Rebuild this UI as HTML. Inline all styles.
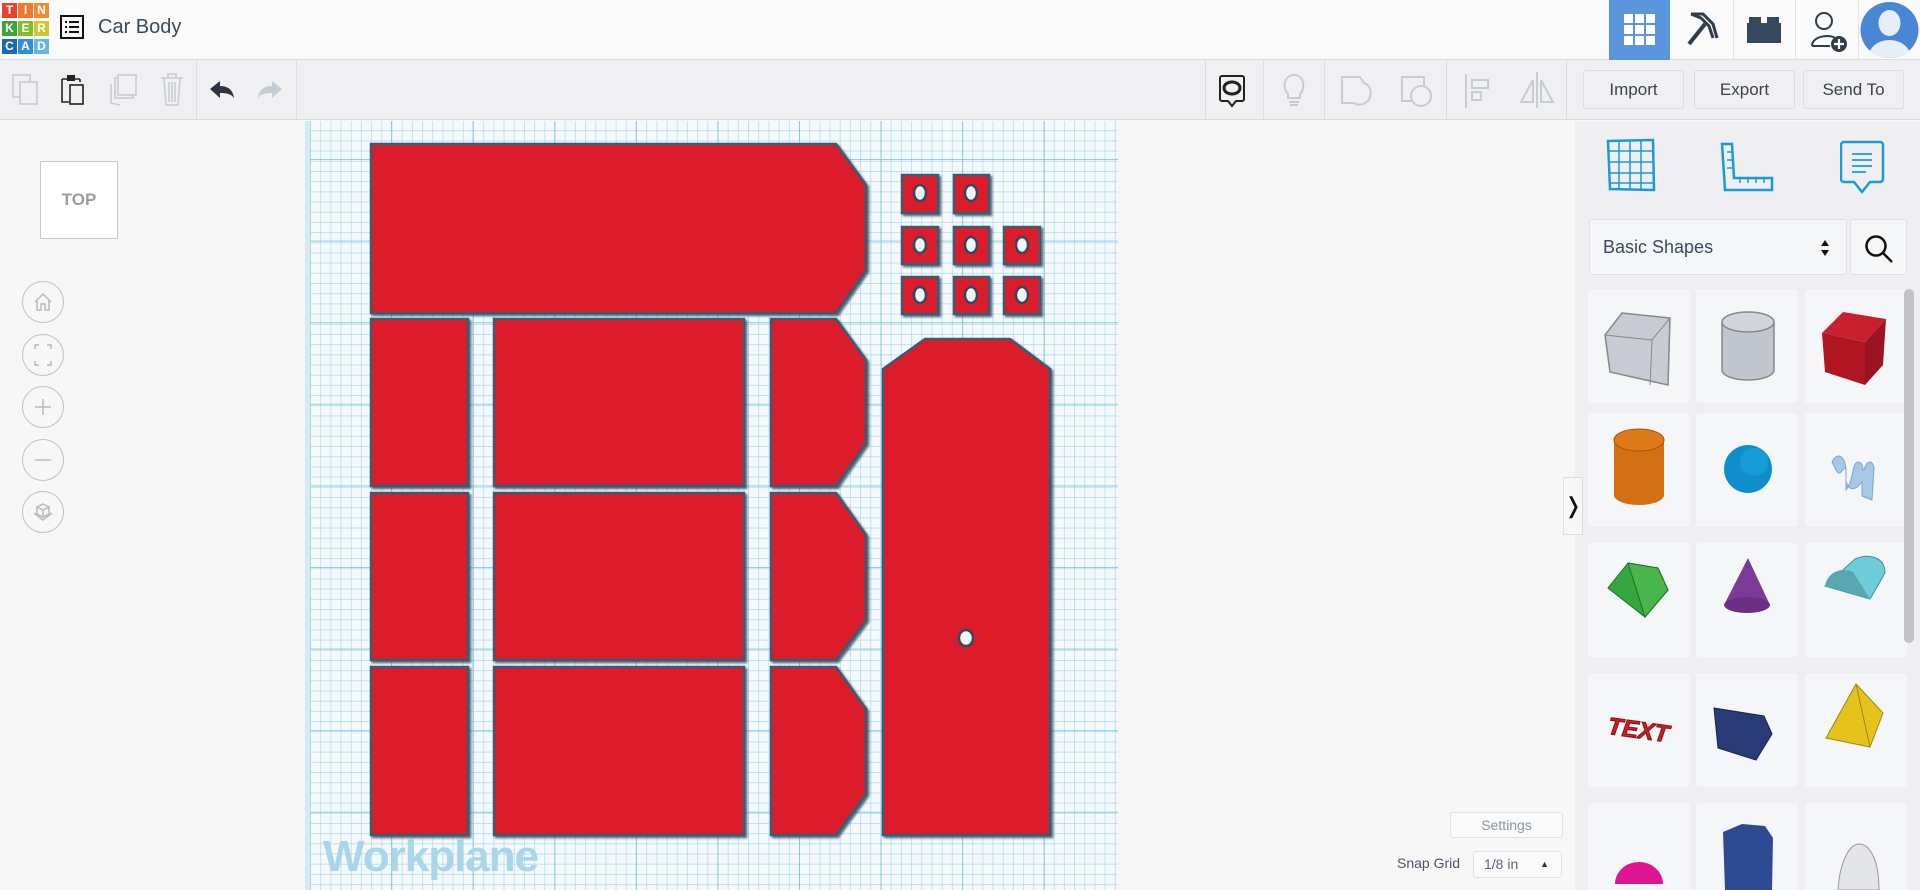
<!DOCTYPE html>
<html style="overflow:hidden;width:1920px;height:890px"><head><meta charset="utf-8"><style>
*{box-sizing:border-box;margin:0;padding:0}
body{width:1920px;height:890px;overflow:hidden;background:#f7f7f8;font-family:"Liberation Sans",sans-serif;position:relative}
.abs{position:absolute}
#hdr{left:0;top:0;width:1920px;height:60px;background:#fafafa;border-bottom:1px solid #dcdde0;box-shadow:0 1px 3px rgba(0,0,0,.08)}
#tb{left:0;top:60px;width:1920px;height:60px;background:#f0f0f2;border-bottom:1px solid #dcdde0}
.sep{position:absolute;top:60px;width:1px;height:60px;background:#dcdde0}
.tile{position:absolute;width:15px;height:15px;color:#fff;font-weight:bold;font-size:12px;text-align:center;line-height:15px}
.btn{position:absolute;top:70px;height:39px;width:101px;border:1px solid #dcdde0;border-radius:3px;background:#f0f0f2;color:#3a4250;font-size:17px;text-align:center;line-height:37px}
#wp{left:305px;top:121px;width:813px;height:769px;background-color:#f4f9fb;
background-image:
linear-gradient(90deg,rgba(120,190,220,.75) 1px,transparent 1px),
linear-gradient(0deg,rgba(120,190,220,.75) 1px,transparent 1px),
linear-gradient(90deg,rgba(150,205,230,.55) 1px,transparent 1px),
linear-gradient(0deg,rgba(150,205,230,.55) 1px,transparent 1px);
background-size:81.6px 81.6px,81.6px 81.6px,10.2px 10.2px,10.2px 10.2px;
background-position:81px 39px,81px 39px,0 0,0 0;border-left:5px solid #d5ebf4}
#rp{left:1575px;top:121px;width:345px;height:769px;background:#efeff1;overflow:hidden}
.card{position:absolute;width:102px;height:114px;background:#f5f6f8;border-radius:4px}
.circ{position:absolute;left:22px;width:42px;height:42px;border:1.5px solid #bfc1c5;border-radius:50%;background:#f7f7f8}
</style></head><body>
<div id="hdr" class="abs"></div>
<div class="tile" style="left:2px;top:3px;background:#e8412c">T</div>
<div class="tile" style="left:18px;top:3px;background:#f3762f">I</div>
<div class="tile" style="left:34px;top:3px;background:#f28a2e">N</div>
<div class="tile" style="left:2px;top:21px;background:#3aa53c">K</div>
<div class="tile" style="left:18px;top:21px;background:#7fbd2d">E</div>
<div class="tile" style="left:34px;top:21px;background:#cfc52c">R</div>
<div class="tile" style="left:2px;top:39px;background:#1869b0">C</div>
<div class="tile" style="left:18px;top:39px;background:#2f8fd2">A</div>
<div class="tile" style="left:34px;top:39px;background:#65b6e3">D</div>
<svg class="abs" style="left:60px;top:15px" width="24" height="24" viewBox="0 0 24 24"><rect x="1" y="1" width="22" height="22" fill="none" stroke="#111" stroke-width="2"/><rect x="5" y="6" width="2" height="2" fill="#111"/><rect x="9" y="6" width="10" height="2" fill="#111"/><rect x="5" y="11" width="2" height="2" fill="#111"/><rect x="9" y="11" width="10" height="2" fill="#111"/><rect x="5" y="16" width="2" height="2" fill="#111"/><rect x="9" y="16" width="10" height="2" fill="#111"/></svg>
<div class="abs" style="left:98px;top:16px;font-size:20px;color:#3a4a5e">Car Body</div>
<div class="abs" style="left:1609px;top:0;width:61px;height:60px;background:#5b96dc"></div>
<svg class="abs" style="left:1624px;top:14px" width="32" height="32"><g fill="#fff"><rect x="0" y="0" width="9" height="9"/><rect x="11" y="0" width="9" height="9"/><rect x="22" y="0" width="9" height="9"/><rect x="0" y="11" width="9" height="9"/><rect x="11" y="11" width="9" height="9"/><rect x="22" y="11" width="9" height="9"/><rect x="0" y="22" width="9" height="9"/><rect x="11" y="22" width="9" height="9"/><rect x="22" y="22" width="9" height="9"/></g></svg>
<svg class="abs" style="left:1683px;top:10px" width="40" height="40" viewBox="0 0 40 40"><path d="M8 4 L20 4 L30 14 L34 28 M8 4 L18 8 L26 16 L30 28" fill="none" stroke="#2f3c4a" stroke-width="3"/><path d="M22 14 L6 34" stroke="#2f3c4a" stroke-width="4"/></svg>
<svg class="abs" style="left:1747px;top:17px" width="34" height="26"><rect x="0" y="6" width="34" height="20" fill="#34495e"/><rect x="2" y="0" width="12" height="8" fill="#34495e"/><rect x="20" y="0" width="12" height="8" fill="#34495e"/></svg>
<svg class="abs" style="left:1810px;top:10px" width="40" height="44" viewBox="0 0 40 44"><circle cx="14" cy="11" r="8" fill="none" stroke="#2f3c4a" stroke-width="2"/><path d="M2 36 C2 24 26 24 26 30" fill="none" stroke="#2f3c4a" stroke-width="2"/><path d="M2 36 L20 36" stroke="#2f3c4a" stroke-width="2"/><circle cx="29" cy="34" r="8" fill="#2f3c4a"/><path d="M29 29v10M24 34h10" stroke="#fff" stroke-width="2.2"/></svg>
<div class="abs" style="left:1733px;top:0;width:1px;height:60px;background:#e2e3e6"></div>
<div class="abs" style="left:1795px;top:0;width:1px;height:60px;background:#e2e3e6"></div>
<div class="abs" style="left:1858px;top:0;width:1px;height:60px;background:#e2e3e6"></div>
<svg class="abs" style="left:1860px;top:1px" width="59" height="58"><defs><clipPath id="c"><ellipse cx="29.5" cy="29" rx="29" ry="28"/></clipPath></defs><ellipse cx="29.5" cy="29" rx="29" ry="28" fill="#4a86d6"/><g clip-path="url(#c)" fill="#e6eef8"><ellipse cx="29.5" cy="22" rx="11" ry="13"/><ellipse cx="29.5" cy="56" rx="21" ry="17"/></g></svg>
<div id="tb" class="abs"></div>
<svg class="abs" style="left:12px;top:74px" width="26" height="32"><rect x="1" y="1" width="17" height="22" fill="none" stroke="#c6ccd3" stroke-width="1.6"/><rect x="8" y="8" width="17" height="22" fill="#f0f0f2" stroke="#c6ccd3" stroke-width="1.6"/></svg>
<svg class="abs" style="left:61px;top:74px" width="24" height="32"><path d="M1 5h5M14 5h5M1 5v23h7M19 5v3" fill="none" stroke="#222" stroke-width="1.6"/><rect x="6" y="1" width="8" height="6" fill="#222"/><rect x="9" y="11" width="13" height="19" fill="none" stroke="#222" stroke-width="1.6"/></svg>
<svg class="abs" style="left:108px;top:74px" width="30" height="32"><path d="M3 10v19l9 2" fill="none" stroke="#c6ccd3" stroke-width="1.6"/><rect x="7" y="4" width="18" height="20" fill="none" stroke="#c6ccd3" stroke-width="1.6"/><rect x="10" y="1" width="18" height="20" fill="#f0f0f2" stroke="#c6ccd3" stroke-width="1.6"/></svg>
<svg class="abs" style="left:160px;top:72px" width="24" height="34"><path d="M1 6h22M8 6V2h8v4M4 6l2 27h12l2-27M9 10v20M12 10v20M15 10v20" fill="none" stroke="#c6ccd3" stroke-width="1.6"/></svg>
<div class="sep" style="left:196px"></div>
<svg class="abs" style="left:209px;top:80px" width="26" height="20"><path d="M1 9l10-8v5c8 0 13 4 14 12-3-4-7-5-14-5v5z" fill="#2c3540"/></svg>
<svg class="abs" style="left:257px;top:80px" width="26" height="20"><path d="M25 9l-10-8v5c-8 0-13 4-14 12 3-4 7-5 14-5v5z" fill="#c6ccd3"/></svg>
<div class="sep" style="left:296px"></div>
<div class="sep" style="left:1205px"></div>
<svg class="abs" style="left:1218px;top:74px" width="28" height="36"><path d="M4 2h20a2 2 0 0 1 2 2v21a2 2 0 0 1-2 2h-6l-4 5-4-5H4a2 2 0 0 1-2-2V4a2 2 0 0 1 2-2z" fill="none" stroke="#222" stroke-width="2"/><ellipse cx="14" cy="14" rx="8" ry="6" fill="none" stroke="#222" stroke-width="3"/></svg>
<div class="sep" style="left:1263px"></div>
<svg class="abs" style="left:1282px;top:72px" width="24" height="36"><path d="M6 22c-6-6-4-19 6-19s12 13 6 19v4H6z" fill="none" stroke="#c6ccd3" stroke-width="2"/><path d="M7 30h10M8 33h8" stroke="#c6ccd3" stroke-width="2"/></svg>
<div class="sep" style="left:1324px"></div>
<svg class="abs" style="left:1340px;top:75px" width="34" height="34"><path d="M2 2h18l4 6c6 2 8 8 6 14s-10 10-16 6H2z" fill="none" stroke="#c6ccd3" stroke-width="2"/></svg>
<svg class="abs" style="left:1400px;top:75px" width="34" height="34"><rect x="2" y="2" width="22" height="24" fill="none" stroke="#c6ccd3" stroke-width="2"/><circle cx="21" cy="21" r="10" fill="#f0f0f2" stroke="#c6ccd3" stroke-width="2"/></svg>
<div class="sep" style="left:1446px"></div>
<svg class="abs" style="left:1464px;top:72px" width="28" height="36"><path d="M2 2v34" stroke="#c6ccd3" stroke-width="2"/><rect x="8" y="8" width="16" height="8" fill="none" stroke="#c6ccd3" stroke-width="2"/><rect x="8" y="20" width="9" height="8" fill="none" stroke="#c6ccd3" stroke-width="2"/></svg>
<svg class="abs" style="left:1518px;top:72px" width="38" height="36"><path d="M19 0v36M15 8L3 30h12zM23 8l12 22H23z" fill="none" stroke="#c6ccd3" stroke-width="2"/></svg>
<div class="sep" style="left:1566px"></div>
<div class="btn" style="left:1583px">Import</div>
<div class="btn" style="left:1694px">Export</div>
<div class="btn" style="left:1803px">Send To</div>
<div id="wp" class="abs"></div>
<div class="abs" style="left:323px;top:832px;font-size:44px;font-weight:bold;color:#a9d6e8;letter-spacing:-1px">Workplane</div>
<svg class="abs" style="left:0;top:0" width="1920" height="890">
<defs><filter id="sh"><feDropShadow dx="2" dy="2" stdDeviation="1" flood-color="#2c4a60" flood-opacity=".8"/></filter></defs>
<g fill="#dc1c2c" stroke="#3d5a72" stroke-width="2.5" filter="url(#sh)">
<polygon points="371,144 836,144 866,185 866,270 836,313 371,313"/>
<polygon points="371,319 468,319 468,486 371,486"/>
<polygon points="494,319 744,319 744,486 494,486"/>
<polygon points="771,319 836,319 866,360 866,443 836,486 771,486"/>
<polygon points="371,493 468,493 468,660 371,660"/>
<polygon points="494,493 744,493 744,660 494,660"/>
<polygon points="771,493 836,493 866,535 866,620 836,660 771,660"/>
<polygon points="371,667 468,667 468,835 371,835"/>
<polygon points="494,667 744,667 744,835 494,835"/>
<polygon points="771,667 836,667 866,709 866,794 836,835 771,835"/>
<polygon points="883,369 925,339 1010,339 1050,369 1050,835 883,835"/>
<rect x="902" y="175" width="36" height="38"/><rect x="954" y="175" width="35" height="38"/>
<rect x="902" y="227" width="36" height="37"/><rect x="954" y="227" width="35" height="37"/><rect x="1004" y="227" width="36" height="37"/>
<rect x="902" y="277" width="36" height="37"/><rect x="954" y="277" width="35" height="37"/><rect x="1004" y="277" width="36" height="37"/>
</g>
<g fill="#eef6fa" stroke="#2f4a60" stroke-width="2.5">
<ellipse cx="966" cy="638" rx="7" ry="8"/>
<ellipse cx="920" cy="193" rx="6" ry="8"/><ellipse cx="971" cy="193" rx="6" ry="8"/>
<ellipse cx="920" cy="245" rx="6" ry="8"/><ellipse cx="971" cy="245" rx="6" ry="8"/><ellipse cx="1022" cy="245" rx="6" ry="8"/>
<ellipse cx="920" cy="295" rx="6" ry="8"/><ellipse cx="971" cy="295" rx="6" ry="8"/><ellipse cx="1022" cy="295" rx="6" ry="8"/>
</g></svg>
<div class="abs" style="left:40px;top:161px;width:78px;height:78px;border:1.5px solid #c6c7ca;background:#fff;color:#9a9ca0;font-weight:bold;font-size:17px;text-align:center;line-height:76px">TOP</div>
<div class="circ" style="top:281px"></div>
<div class="circ" style="top:334px"></div>
<div class="circ" style="top:386px"></div>
<div class="circ" style="top:439px"></div>
<div class="circ" style="top:491px"></div>
<svg class="abs" style="left:0;top:0" width="90" height="540" fill="none" stroke="#b8babe" stroke-width="1.5">
<path d="M35 302l8-8 8 8M37 300v10h4v-6h4v6h4v-10"/>
<path d="M35 349v-4h4M47 345h4v4M51 361v4h-4M39 365h-4v-4"/>
<path d="M43 399v16M35 407h16"/>
<path d="M35 460h16"/>
<path d="M43 504l6 3v7l-6 3-6-3v-7zM37 507l6 3 6-3M43 510v7M34 513l9 7 9-7"/>
</svg>
<div class="abs" style="left:1450px;top:812px;width:113px;height:26px;border:1px solid #e0e1e4;border-radius:3px;background:#fafafa;color:#8a96a6;font-size:14px;text-align:center;line-height:24px">Settings</div>
<div class="abs" style="left:1397px;top:855px;font-size:14px;color:#4a5566">Snap Grid</div>
<div class="abs" style="left:1473px;top:851px;width:89px;height:27px;border:1px solid #e0e1e4;border-radius:3px;background:#fafafa;color:#5a6576;font-size:14px;line-height:25px;padding-left:10px">1/8 in<span style="position:absolute;right:12px;top:0;font-size:9px;color:#333">▲</span></div>
<div id="rp" class="abs">
<div class="card" style="left:13px;top:168px"></div><div class="card" style="left:121px;top:168px"></div><div class="card" style="left:230px;top:168px"></div>
<div class="card" style="left:13px;top:292px"></div><div class="card" style="left:121px;top:292px"></div><div class="card" style="left:230px;top:292px"></div>
<div class="card" style="left:13px;top:422px"></div><div class="card" style="left:121px;top:422px"></div><div class="card" style="left:230px;top:422px"></div>
<div class="card" style="left:13px;top:552px"></div><div class="card" style="left:121px;top:552px"></div><div class="card" style="left:230px;top:552px"></div>
<div class="card" style="left:13px;top:682px"></div><div class="card" style="left:121px;top:682px"></div><div class="card" style="left:230px;top:682px"></div>
</div>
<div class="abs" style="left:1563px;top:477px;width:20px;height:58px;background:#f7f7f8;border:1px solid #dcdde0;font-size:22px;line-height:56px;text-align:center;color:#111">❭</div>
<svg class="abs" style="left:1605px;top:138px" width="54" height="56" fill="none" stroke="#1a9bd7" stroke-width="2.5"><path d="M3 3l45 -1 1 50-44-1z"/><path d="M14 3v48M25 3v48M36 3v48M4 13h44M4 24h44M4 35h44M4 45h44" stroke-width="1.5"/></svg>
<svg class="abs" style="left:1720px;top:142px" width="56" height="54" fill="none" stroke="#1a9bd7" stroke-width="2.5"><path d="M2 2h10l2 34h38v12H5z"/><path d="M12 10h-5M12 18h-5M12 26h-5M20 36v5M28 36v5M36 36v5M44 36v5" stroke-width="1.5"/></svg>
<svg class="abs" style="left:1840px;top:140px" width="46" height="54" fill="none" stroke="#1a9bd7" stroke-width="2.5"><path d="M4 2h36a3 3 0 0 1 3 3v34a3 3 0 0 1-3 3H30l-8 10-8-10H4a3 3 0 0 1-3-3V5a3 3 0 0 1 3-3z"/><path d="M12 14h20M12 20h20M12 26h20M12 32h14" stroke-width="1.8"/></svg>
<div class="abs" style="left:1589px;top:219px;width:258px;height:56px;background:#f5f6f8;border:1px solid #e0e1e4;border-radius:3px;font-size:18px;color:#3a4a5e;line-height:54px;padding-left:13px">Basic Shapes<svg style="position:absolute;right:16px;top:19px" width="10" height="18"><path d="M1 7l4-6 4 6zM1 11l4 6 4-6z" fill="#111"/></svg></div>
<div class="abs" style="left:1850px;top:219px;width:57px;height:56px;background:#f5f6f8;border:1px solid #e0e1e4;border-radius:3px"><svg style="position:absolute;left:13px;top:14px" width="30" height="30" fill="none" stroke="#111" stroke-width="2.5"><circle cx="12" cy="12" r="9.5"/><path d="M19 19l9 9"/></svg></div>
<svg class="abs" style="left:1560px;top:120px" width="360" height="770">
<polygon points="45,215 62,193 110,198 108,265 50,252" fill="#c8cbd3" stroke="#888" stroke-width="1.5"/>
<path d="M45,215 L92,220 L110,198 M92,220 L90,265" stroke="#888" fill="none"/>
<path d="M162,202 v48 a26,10 0 0 0 52,0 v-48" fill="#c2c6ce" stroke="#888" stroke-width="1.5"/><ellipse cx="188" cy="202" rx="26" ry="10" fill="#d2d5dc" stroke="#888" stroke-width="1.5"/>
<polygon points="262,213 283,192 326,199 305,222" fill="#c8202c"/><polygon points="262,213 305,222 305,265 265,252" fill="#b01622"/><polygon points="305,222 326,199 323,245 305,265" fill="#9c1420"/>
<path d="M54,320 v55 a25,10 0 0 0 50,0 v-55" fill="#d36f15"/><ellipse cx="79" cy="320" rx="25" ry="11" fill="#e07b1c" stroke="#a85410"/>
<circle cx="188" cy="349" r="24" fill="#0f8ecb"/><circle cx="194" cy="342" r="14" fill="#19a5df" opacity=".6"/>
<path d="M272,342 c6,-12 14,-4 14,8 l0,20 c8,-10 6,-28 12,-28 c6,0 4,10 6,8 c2,-8 8,-12 10,-2 l-2,32 l-10,-4 l0,-14 c-6,8 -12,10 -16,0 l0,-14 c-4,0 -6,10 -10,2z" fill="#a6c8e6" stroke="#7aa6cc"/>
<polygon points="48,468 68,443 98,448 108,470 85,497" fill="#34a83e" stroke="#1f6f26"/><polygon points="68,443 98,448 108,470 85,497" fill="#48b64c" stroke="#1f6f26"/>
<polygon points="188,438 164,485 210,485" fill="#7c3a98"/><ellipse cx="187" cy="485" rx="23" ry="8" fill="#6a2f84"/>
<path d="M265,466 l30,-27 c14,-6 30,-2 30,14 l-15,26z" fill="#6ecbd8" stroke="#3a90a0"/><path d="M265,466 c2,-12 14,-20 28,-14 l17,27z" fill="#56a7b0"/>
<text x="48" y="618" font-family="Liberation Sans" font-weight="bold" font-style="italic" font-size="24" fill="#c81e26" stroke="#8a1018" stroke-width="1" transform="rotate(8 78 608)">TEXT</text>
<polygon points="154,588 204,596 212,614 196,640 158,628" fill="#283b76" stroke="#1a2650"/>
<polygon points="296,564 266,618 310,627 323,593" fill="#e6c21c" stroke="#a08810"/><path d="M296,564 L310,627" stroke="#a08810"/>
<path d="M55,764 a24,22 0 0 1 48,0z" fill="#de1591"/>
<polygon points="163,712 182,704 205,706 213,718 212,770 165,770" fill="#2e4a92"/>
<path d="M278,770 c2,-30 12,-46 21,-46 c10,0 20,14 20,46z" fill="#e2e4e8" stroke="#999"/>
</svg>
<div class="abs" style="left:1904px;top:289px;width:10px;height:354px;background:#c2c2c4;border-radius:5px"></div>
</body></html>
